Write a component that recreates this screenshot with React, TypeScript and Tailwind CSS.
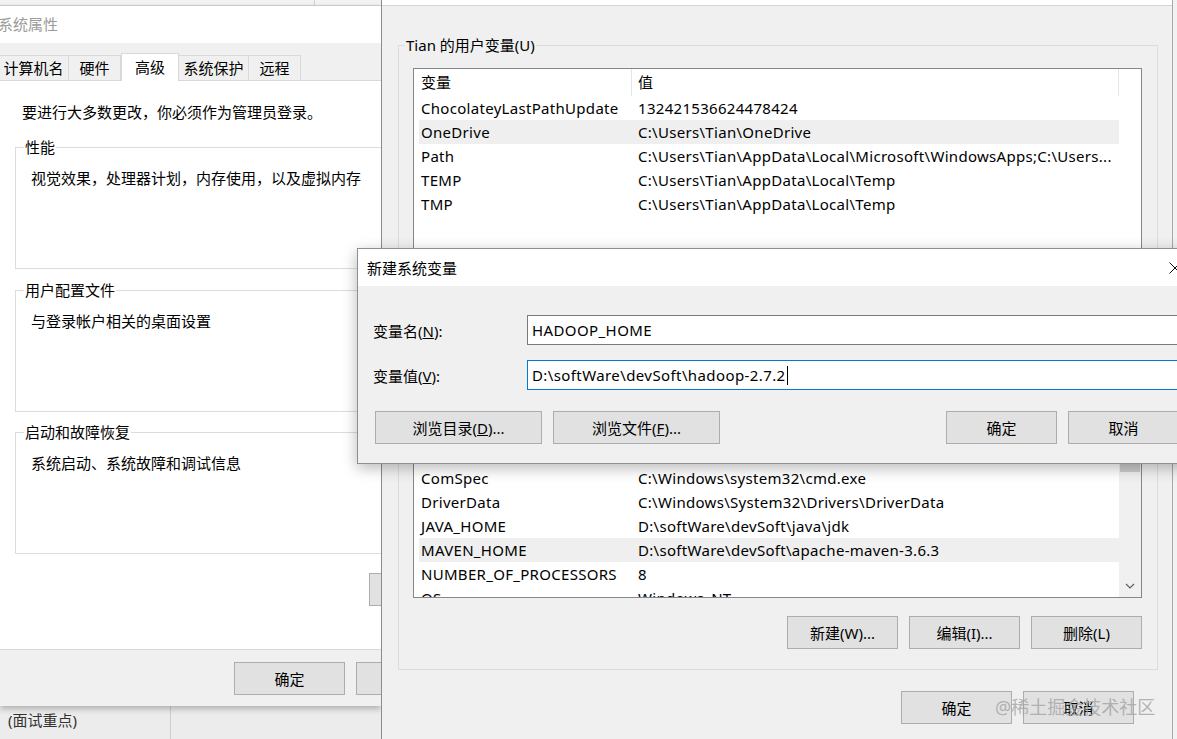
import React from "react"

const FONT = "font-[family-name:Noto_Sans,Noto_Sans_CJK_SC,sans-serif]"

const userVars: [string, string][] = [
  ["ChocolateyLastPathUpdate", "132421536624478424"],
  ["OneDrive", "C:\\Users\\Tian\\OneDrive"],
  ["Path", "C:\\Users\\Tian\\AppData\\Local\\Microsoft\\WindowsApps;C:\\Users..."],
  ["TEMP", "C:\\Users\\Tian\\AppData\\Local\\Temp"],
  ["TMP", "C:\\Users\\Tian\\AppData\\Local\\Temp"],
]

const systemVars: [string, string][] = [
  ["ALLUSERSPROFILE", "C:\\ProgramData"],
  ["APPDATA", "C:\\ProgramData"],
  ["CLASSPATH", ".;%JAVA_HOME%\\lib"],
  ["ChocolateyInstall", "C:\\ProgramData\\chocolatey"],
  ["ComSpec", "C:\\Windows\\system32\\cmd.exe"],
  ["DriverData", "C:\\Windows\\System32\\Drivers\\DriverData"],
  ["JAVA_HOME", "D:\\softWare\\devSoft\\java\\jdk"],
  ["MAVEN_HOME", "D:\\softWare\\devSoft\\apache-maven-3.6.3"],
  ["NUMBER_OF_PROCESSORS", "8"],
  ["OS", "Windows_NT"],
]

function WinButton({ children, className = "" }: { children: React.ReactNode; className?: string }) {
  return (
    <div className={`flex h-[33px] shrink-0 items-center justify-center border border-[#adadad] bg-[#e1e1e1] leading-[20px] ${className}`}>
      {children}
    </div>
  )
}

function GroupBox({
  label,
  labelBg,
  labelLeft,
  className = "",
  children,
}: {
  label: string
  labelBg: string
  labelLeft: string
  className?: string
  children?: React.ReactNode
}) {
  return (
    <div className={`relative border border-[#dcdcdc] ${className}`}>
      <span className={`absolute top-[-11px] px-[1px] leading-[20px] whitespace-nowrap ${labelBg} ${labelLeft}`}>{label}</span>
      {children}
    </div>
  )
}

function ListHeader() {
  return (
    <div className="flex h-[27px] shrink-0 items-center">
      <div className="h-full w-[218px] border-r border-[#e5e5e5] pl-[7px] leading-[27px]">变量</div>
      <div className="h-full w-[487px] border-r border-[#e5e5e5] pl-[6px] leading-[27px]">值</div>
    </div>
  )
}

function VarRow({ name, value, active }: { name: string; value: string; active?: boolean }) {
  return (
    <div className={`ml-[5px] flex h-[24px] w-[700px] shrink-0 items-center whitespace-nowrap tracking-[0.3px] ${active ? "bg-[#efefef]" : ""}`}>
      <div className="w-[212px] overflow-hidden pl-[2px]">{name}</div>
      <div className="flex-1 overflow-hidden pl-[7px]">{value}</div>
    </div>
  )
}

function SystemProperties() {
  return (
    <div className="absolute left-0 top-[5px] z-10 flex h-[701px] w-[381px] flex-col overflow-hidden border-t border-[#c9c9c9] bg-[#f0f0f0] shadow-[0_3px_6px_rgba(0,0,0,0.25)]">
      <div className="h-[37px] shrink-0 bg-white">
        <span className="ml-[-2px] leading-[37px] text-[#9b9b9b]">系统属性</span>
      </div>

      {/* tabs */}
      <div className="flex h-[37px] shrink-0 items-end">
        <div className="ml-[-2px] flex h-[25px] w-[71px] items-center justify-center border border-b-0 border-[#d9d9d9]">计算机名</div>
        <div className="ml-[-1px] flex h-[25px] w-[53px] items-center justify-center border border-b-0 border-[#d9d9d9]">硬件</div>
        <div className="relative z-10 mb-[-1px] flex h-[28px] w-[58px] items-start justify-center border border-b-0 border-[#d9d9d9] bg-white pt-[2px]">高级</div>
        <div className="ml-[-1px] flex h-[25px] w-[71px] items-center justify-center border border-b-0 border-[#d9d9d9]">系统保护</div>
        <div className="ml-[-1px] flex h-[25px] w-[53px] items-center justify-center border border-b-0 border-[#d9d9d9]">远程</div>
      </div>

      {/* tab page */}
      <div className="h-[570px] w-[440px] shrink-0 border-y border-[#d9d9d9] bg-white px-[15px] pt-[21px]">
        <p className="pl-[7px] leading-[20px]">要进行大多数更改，你必须作为管理员登录。</p>

        <GroupBox label="性能" labelBg="bg-white" labelLeft="left-[8px]" className="mt-[25px] h-[122px]">
          <p className="pl-[15px] pt-[20px] leading-[20px]">视觉效果，处理器计划，内存使用，以及虚拟内存</p>
        </GroupBox>

        <GroupBox label="用户配置文件" labelBg="bg-white" labelLeft="left-[8px]" className="mt-[21px] h-[122px]">
          <p className="pl-[15px] pt-[20px] leading-[20px]">与登录帐户相关的桌面设置</p>
        </GroupBox>

        <GroupBox label="启动和故障恢复" labelBg="bg-white" labelLeft="left-[8px]" className="mt-[20px] h-[122px]">
          <p className="pl-[15px] pt-[20px] leading-[20px]">系统启动、系统故障和调试信息</p>
        </GroupBox>

        <WinButton className="ml-[354px] mt-[19px] w-[160px]">环境变量(N)...</WinButton>
      </div>

      {/* bottom buttons */}
      <div className="flex flex-1 gap-[11px] pl-[234px] pt-[12px]">
        <WinButton className="w-[111px]">确定</WinButton>
        <WinButton className="w-[111px]">取消</WinButton>
      </div>
    </div>
  )
}

function EnvironmentVariables() {
  return (
    <div className="absolute left-[381px] top-0 z-20 flex h-[739px] w-[792px] flex-col border-x border-l-[#8c8c8c] border-r-[#a8a8a8] bg-[#f0f0f0]">
      <div className="h-[6px] shrink-0 border-b border-[#d4d4d4] bg-white" />

      <GroupBox label="Tian 的用户变量(U)" labelBg="bg-[#f0f0f0]" labelLeft="left-[6px]" className="ml-[16px] mt-[39px] h-[250px] w-[760px] shrink-0">
        <div className="ml-[14px] mt-[22px] flex h-[200px] w-[729px] flex-col overflow-hidden border border-[#828790] bg-white">
          <ListHeader />
          {userVars.map(([n, v], i) => (
            <VarRow key={n} name={n} value={v} active={i === 1} />
          ))}
        </div>
      </GroupBox>

      <GroupBox label="系统变量(S)" labelBg="bg-[#f0f0f0]" labelLeft="left-[6px]" className="ml-[16px] mt-[24px] h-[351px] w-[760px] shrink-0">
        <div className="ml-[14px] mt-[22px] flex h-[256px] w-[729px] overflow-hidden border border-[#828790] bg-white">
          <div className="flex w-[705px] flex-col overflow-hidden">
            <ListHeader />
            {systemVars.map(([n, v], i) => (
              <VarRow key={n} name={n} value={v} active={i === 7} />
            ))}
          </div>
          <div className="flex w-[22px] flex-col bg-[#f0f0f0]">
            <div className="h-[17px] shrink-0" />
            <div className="mx-[1px] h-[112px] shrink-0 bg-[#cdcdcd]" />
            <div className="flex-1" />
            <div className="flex h-[22px] shrink-0 items-center justify-center">
              <svg width="10" height="6" viewBox="0 0 10 6">
                <path d="M1 1l4 4 4-4" fill="none" stroke="#606060" strokeWidth="1.2" />
              </svg>
            </div>
          </div>
        </div>

        <div className="ml-[14px] mt-[18px] flex w-[729px] justify-end gap-[11px]">
          <WinButton className="w-[111px]">新建(W)...</WinButton>
          <WinButton className="w-[111px]">编辑(I)...</WinButton>
          <WinButton className="w-[111px]">删除(L)</WinButton>
        </div>
      </GroupBox>

      <div className="mt-[21px] flex justify-end gap-[11px] pr-[38px]">
        <WinButton className="w-[111px]">确定</WinButton>
        <WinButton className="w-[111px]">取消</WinButton>
      </div>
    </div>
  )
}

function NewVariableDialog() {
  return (
    <div className="absolute left-[357px] top-[248px] z-30 flex h-[216px] w-[838px] flex-col border border-[#8f8f8f] bg-[#f0f0f0] shadow-[0_4px_14px_rgba(0,0,0,0.28)]">
      <div className="flex h-[37px] shrink-0 items-center justify-between bg-white pl-[9px] pr-[13px]">
        <span className="leading-[20px]">新建系统变量</span>
        <svg width="12" height="12" viewBox="0 0 12 12">
          <path d="M0.5 0.5l11 11M11.5 0.5l-11 11" stroke="#111" strokeWidth="1" />
        </svg>
      </div>

      <div className="flex flex-col px-[15px] pt-[29px]">
        <div className="flex h-[30px] items-center">
          <span className="w-[154px] pt-[2px] leading-[20px]">
            变量名(<span className="underline">N</span>):
          </span>
          <div className="flex h-[30px] flex-1 items-center border border-[#7a7a7a] bg-white pl-[4px] leading-[20px] tracking-[0.4px]">HADOOP_HOME</div>
        </div>

        <div className="mt-[15px] flex h-[30px] items-center">
          <span className="w-[154px] pt-[2px] leading-[20px]">
            变量值(<span className="underline">V</span>):
          </span>
          <div className="flex h-[30px] flex-1 items-center border border-[#0078d7] bg-white pl-[4px] leading-[20px] tracking-[0.4px]">
            D:\softWare\devSoft\hadoop-2.7.2
            <span className="ml-[1px] inline-block h-[19px] w-[1px] bg-black" />
          </div>
        </div>

        <div className="mt-[21px] flex gap-[11px] pl-[2px]">
          <WinButton className="w-[167px]">
            浏览目录(<span className="underline">D</span>)...
          </WinButton>
          <WinButton className="w-[167px]">
            浏览文件(<span className="underline">F</span>)...
          </WinButton>
          <WinButton className="ml-auto w-[111px]">确定</WinButton>
          <WinButton className="w-[111px]">取消</WinButton>
        </div>
      </div>
    </div>
  )
}

export default function App() {
  return (
    <div className={`relative h-[739px] w-[1177px] overflow-hidden bg-[#f2f2f2] text-[15px] text-black ${FONT}`}>
      {/* window strip peeking out above system properties */}
      <div className="flex h-[5px] w-[381px] bg-[#f3f3f3]">
        <div className="w-[315px] border-r border-[#cfcfcf]" />
      </div>

      {/* window behind, bottom left */}
      <div className="absolute left-0 top-[706px] flex h-[33px] w-[381px] bg-[#ececec] text-[#333]">
        <div className="w-[171px] border-r border-[#cfcfcf] pl-[8px] pt-[4px] leading-[20px]">(面试重点)</div>
      </div>

      <SystemProperties />
      <EnvironmentVariables />
      <NewVariableDialog />

      <span className="absolute left-[995px] top-[696px] z-40 text-[18px] leading-[22px] text-[#a3a3a3]/80">@稀土掘金技术社区</span>
    </div>
  )
}
